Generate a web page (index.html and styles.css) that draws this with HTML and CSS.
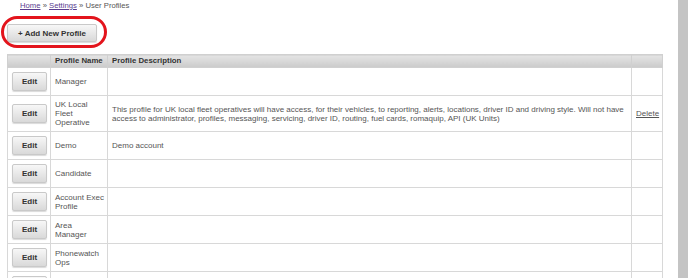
FILE: index.html
```html
<!DOCTYPE html>
<html>
<head>
<meta charset="utf-8">
<link rel="stylesheet" href="styles.css">
</head>
<body>
<div class="page">
  <div class="main">
    <div class="crumbs"><a href="#" class="link">Home</a> » <a href="#" class="link">Settings</a> » User Profiles</div>
    <div class="toolbar">
      <button class="btn add">+ Add New Profile</button>
      <div class="highlight"></div>
    </div>
    <table class="grid">
      <colgroup>
        <col class="c-edit"><col class="c-name"><col class="c-desc"><col class="c-del">
      </colgroup>
      <thead>
        <tr><th></th><th>Profile Name</th><th>Profile Description</th><th></th></tr>
      </thead>
      <tbody>
        <tr><td class="ec"><button class="btn edit">Edit</button></td><td class="nc">Manager</td><td></td><td></td></tr>
        <tr><td class="ec"><button class="btn edit">Edit</button></td><td class="nc">UK Local Fleet Operative</td><td>This profile for UK local fleet operatives will have access, for their vehicles, to reporting, alerts, locations, driver ID and driving style. Will not have access to administrator, profiles, messaging, servicing, driver ID, routing, fuel cards, romaquip, API (UK Units)</td><td class="dc"><a href="#" class="del">Delete</a></td></tr>
        <tr><td class="ec"><button class="btn edit">Edit</button></td><td class="nc">Demo</td><td>Demo account</td><td></td></tr>
        <tr><td class="ec"><button class="btn edit">Edit</button></td><td class="nc">Candidate</td><td></td><td></td></tr>
        <tr><td class="ec"><button class="btn edit">Edit</button></td><td class="nc">Account Exec Profile</td><td></td><td></td></tr>
        <tr><td class="ec"><button class="btn edit">Edit</button></td><td class="nc">Area Manager</td><td></td><td></td></tr>
        <tr><td class="ec"><button class="btn edit">Edit</button></td><td class="nc">Phonewatch Ops</td><td></td><td></td></tr>
        <tr><td class="ec"><button class="btn edit">Edit</button></td><td class="nc">Phonewatch Admin</td><td></td><td></td></tr>
      </tbody>
    </table>
  </div>
  <div class="sidebar"></div>
</div>
</body>
</html>
```
FILE: styles.css
```css
html, body {
  margin: 0;
  padding: 0;
  background: #fff;
  height: 100%;
  overflow: hidden;
}
body {
  font-family: "Liberation Sans", Arial, sans-serif;
  font-size: 8px;
  color: #555;
}
.page {
  display: flex;
  height: 278px;
}
.main {
  width: 662px;
  padding-left: 7px;
  box-sizing: border-box;
}
.sidebar {
  width: 10px;
  margin-left: 16px;
  background: #c4c4c4;
}
.crumbs {
  padding: 1px 0 0 13px;
  height: 10px;
  line-height: 10px;
  font-size: 7.7px;
  color: #555;
}
.link {
  color: #5a3d8f;
  text-decoration: underline;
}
.toolbar {
  position: relative;
  padding-top: 13px;
  box-sizing: border-box;
  height: 43px;
}
.btn {
  font-family: "Liberation Sans", Arial, sans-serif;
  font-weight: bold;
  font-size: 8px;
  color: #333;
  background: linear-gradient(#f7f7f7, #d9d9d9);
  border: 1px solid #c9c9c9;
  border-radius: 2px;
  box-shadow: 0 1px 1px rgba(0,0,0,0.15);
  padding: 0;
  margin: 0;
  cursor: pointer;
  display: block;
}
.add {
  width: 90px;
  height: 18px;
}
.highlight {
  position: absolute;
  left: -6px;
  top: 5px;
  width: 106px;
  height: 32px;
  box-sizing: border-box;
  border: 3px solid #e3141c;
  border-radius: 16px;
}
.grid {
  border-collapse: collapse;
  table-layout: fixed;
  width: 655px;
  border: 1px solid #d6d6d6;
}
.c-edit { width: 43px; }
.c-name { width: 57px; }
.c-desc { width: 524px; }
.c-del { width: 31px; }
.grid th {
  height: 12px;
  padding: 0 4px;
  text-align: left;
  font-weight: bold;
  font-size: 7.8px;
  color: #333;
  background: linear-gradient(#e4e4e4, #cbcbcb);
  border: 1px solid #d0d0d0;
  line-height: 12px;
}
.grid td {
  padding: 4px 4px;
  line-height: 9px;
  vertical-align: middle;
  border: 1px solid #d8d8d8;
  color: #555;
}
.grid td.nc {
  padding-right: 3px;
}
.grid td.ec {
  padding: 4px;
}
.edit {
  width: 35px;
  height: 19px;
}
.dc { text-align: center; }
.del {
  color: #555;
  text-decoration: underline;
}
```
